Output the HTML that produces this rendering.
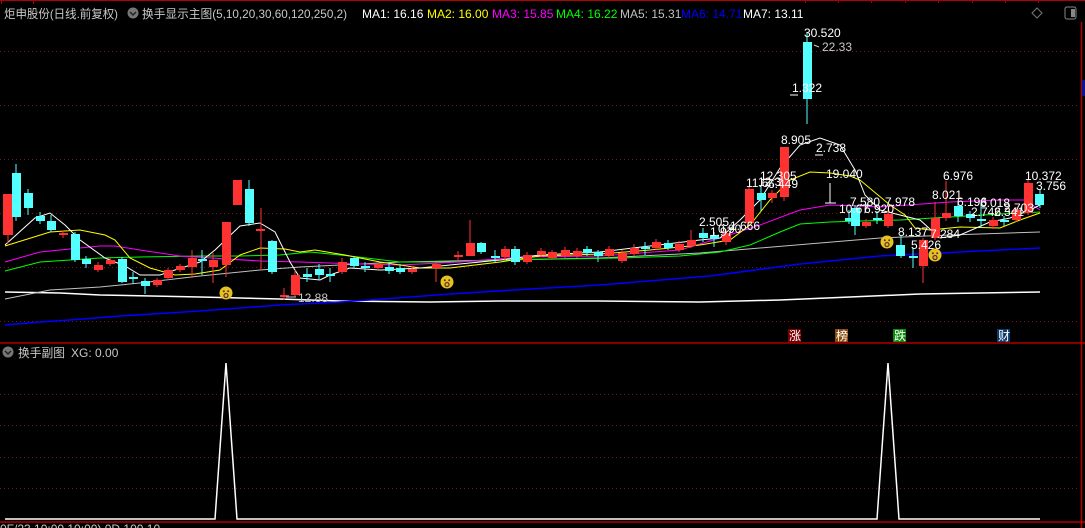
<!DOCTYPE html>
<html><head><meta charset="utf-8"><style>
html,body{margin:0;padding:0;background:#000;width:1085px;height:528px;overflow:hidden}
svg{display:block}
text{font-family:"Liberation Sans","Noto Sans CJK SC",sans-serif}
</style></head><body>
<svg width="1085" height="528" viewBox="0 0 1085 528" xmlns="http://www.w3.org/2000/svg">
<rect width="1085" height="528" fill="#000"/>
<g stroke="#b00000" stroke-width="1">
<line x1="0" y1="0.5" x2="1085" y2="0.5"/>
<line x1="1.5" y1="0" x2="1.5" y2="4"/><line x1="33.5" y1="0" x2="33.5" y2="4"/>
<line x1="805.5" y1="0" x2="805.5" y2="3"/><line x1="838.5" y1="0" x2="838.5" y2="3"/><line x1="871.5" y1="0" x2="871.5" y2="3"/><line x1="905.5" y1="0" x2="905.5" y2="3"/><line x1="938.5" y1="0" x2="938.5" y2="3"/><line x1="972.5" y1="0" x2="972.5" y2="3"/><line x1="1005.5" y1="0" x2="1005.5" y2="3"/><line x1="1038.5" y1="0" x2="1038.5" y2="3"/>
</g>
<g stroke="#7a1616" stroke-width="1" stroke-dasharray="1,3">
<line x1="0" y1="51.5" x2="1080" y2="51.5"/><line x1="0" y1="105.5" x2="1080" y2="105.5"/><line x1="0" y1="159.5" x2="1080" y2="159.5"/><line x1="0" y1="213.5" x2="1080" y2="213.5"/><line x1="0" y1="267.5" x2="1080" y2="267.5"/><line x1="0" y1="321.5" x2="1080" y2="321.5"/>
<line x1="0" y1="394.5" x2="1080" y2="394.5"/><line x1="0" y1="425.5" x2="1080" y2="425.5"/><line x1="0" y1="457.5" x2="1080" y2="457.5"/><line x1="0" y1="488.5" x2="1080" y2="488.5"/>
</g>
<g stroke="#b00000" stroke-width="1.5">
<line x1="0" y1="343" x2="1085" y2="343"/><line x1="0" y1="522" x2="1085" y2="522"/>
<line x1="1081.5" y1="22" x2="1081.5" y2="528"/>
</g>
<rect x="1082" y="80" width="3" height="16" fill="#101090"/>
<text x="4" y="18" font-size="12" fill="#c8c8c8" textLength="114" lengthAdjust="spacingAndGlyphs">炬申股份(日线.前复权)</text>
<circle cx="133" cy="13" r="5.5" fill="#777"/><path d="M130,12 l3,3 l3,-3" stroke="#222" stroke-width="1.5" fill="none"/>
<text x="142" y="18" font-size="12" fill="#c8c8c8" textLength="205" lengthAdjust="spacingAndGlyphs">换手显示主图(5,10,20,30,60,120,250,2)</text>
<text x="362" y="18" font-size="12" fill="#fff">MA1: 16.16</text>
<text x="427" y="18" font-size="12" fill="#ffff00">MA2: 16.00</text>
<text x="492" y="18" font-size="12" fill="#ff00ff">MA3: 15.85</text>
<text x="556" y="18" font-size="12" fill="#00ff00">MA4: 16.22</text>
<text x="620" y="18" font-size="12" fill="#c0c0c0">MA5: 15.31</text>
<text x="681" y="18" font-size="12" fill="#0000ff">MA6: 14.71</text>
<text x="743" y="18" font-size="12" fill="#fff">MA7: 13.11</text>
<path d="M1032,13 l5,-5 l5,5 l-5,5z" stroke="#777" fill="none"/>
<rect x="1065" y="7" width="11" height="12" rx="2" stroke="#888" fill="none"/><rect x="1071" y="9" width="4" height="8" fill="#888"/>
<g fill="none" stroke-width="1">
<polyline stroke="#ffffff" stroke-width="1.5" points="5,292 60,293 100,295 200,297 280,299 340,301 430,302 500,301 600,301 700,302 780,300 850,297 920,294 1040,292"/>
<polyline stroke="#0000ff" stroke-width="1.5" points="5,325 40,322 70,320 120,316 200,311 280,305 340,302 383,299 450,294 530,289 600,285 710,276 800,264 880,256 960,252 1040,248"/>
<polyline stroke="#c0c0c0" points="5,299 50,290 100,287 140,283 200,276 260,270 300,267 360,264 400,262 500,260 600,258 700,253 760,248 820,243 880,238 950,235 1040,232"/>
<polyline stroke="#00ff00" points="5,271 40,262 100,258 140,257 200,256 240,256 280,255 310,252 350,256 400,262 450,262 500,260 560,259 620,258 680,256 720,252 750,245 780,232 800,224 830,222 860,221 900,220 950,217 1000,214 1040,212"/>
<polyline stroke="#ff00ff" points="5,262 40,252 100,246 115,246 140,250 180,256 260,261 300,262 360,264 400,265 460,262 520,257 600,256 680,250 720,238 760,225 800,210 830,205 860,206 880,207 950,202 1000,200 1025,200 1040,210"/>
<polyline stroke="#ffff00" points="5,246 50,232 80,230 105,235 115,240 130,258 150,268 175,275 195,274 220,270 240,255 260,248 285,249 300,252 315,250 345,255 380,262 420,268 450,268 500,262 540,256 600,254 650,250 700,245 730,240 750,225 770,200 790,180 810,172 830,173 850,176 860,180 890,205 905,215 915,228 930,230 960,227 1000,228 1020,220 1040,213"/>
<polyline stroke="#ffffff" points="5,245 35,218 50,213 65,225 80,240 105,258 125,266 140,275 160,275 175,270 200,262 215,250 240,226 260,223 275,232 290,262 300,278 320,280 330,275 350,268 380,270 420,268 460,264 500,260 540,255 600,252 650,246 700,240 720,238 740,220 760,200 780,168 800,145 820,138 840,145 855,170 865,195 880,210 900,215 920,220 940,238 960,235 990,222 1010,218 1030,210 1040,205"/>
</g>
<g stroke="#ff3232" stroke-width="1">
<line x1="8" y1="194" x2="8" y2="243"/><line x1="63" y1="231" x2="63" y2="238"/><line x1="98" y1="262" x2="98" y2="272"/><line x1="110" y1="258" x2="110" y2="266"/><line x1="157" y1="278" x2="157" y2="287"/><line x1="168" y1="268" x2="168" y2="280"/><line x1="180" y1="264" x2="180" y2="272"/><line x1="192" y1="250" x2="192" y2="278"/><line x1="213" y1="253" x2="213" y2="283"/><line x1="226" y1="222" x2="226" y2="277"/><line x1="261" y1="208" x2="261" y2="270"/><line x1="284" y1="288" x2="284" y2="300"/><line x1="295" y1="270" x2="295" y2="297"/><line x1="342" y1="258" x2="342" y2="274"/><line x1="378" y1="262" x2="378" y2="270"/><line x1="412" y1="266" x2="412" y2="274"/><line x1="436" y1="262" x2="436" y2="282"/><line x1="458" y1="251" x2="458" y2="260"/><line x1="470" y1="220" x2="470" y2="256"/><line x1="505" y1="246" x2="505" y2="260"/><line x1="527" y1="252" x2="527" y2="264"/><line x1="541" y1="248" x2="541" y2="257"/><line x1="552" y1="250" x2="552" y2="260"/><line x1="565" y1="247" x2="565" y2="258"/><line x1="577" y1="248" x2="577" y2="258"/><line x1="609" y1="246" x2="609" y2="258"/><line x1="622" y1="250" x2="622" y2="263"/><line x1="634" y1="244" x2="634" y2="256"/><line x1="656" y1="239" x2="656" y2="250"/><line x1="679" y1="241" x2="679" y2="252"/><line x1="691" y1="230" x2="691" y2="248"/><line x1="726" y1="229" x2="726" y2="245"/><line x1="749" y1="187" x2="749" y2="225"/><line x1="772" y1="190" x2="772" y2="203"/><line x1="784" y1="147" x2="784" y2="201"/><line x1="866" y1="219" x2="866" y2="228"/><line x1="888" y1="210" x2="888" y2="228"/><line x1="923" y1="238" x2="923" y2="283"/><line x1="935" y1="202" x2="935" y2="240"/><line x1="946" y1="181" x2="946" y2="221"/><line x1="993" y1="217" x2="993" y2="229"/><line x1="1016" y1="207" x2="1016" y2="222"/><line x1="1028" y1="180" x2="1028" y2="215"/>
</g>
<g stroke="#54ffff" stroke-width="1">
<line x1="16" y1="164" x2="16" y2="221"/><line x1="28" y1="189" x2="28" y2="215"/><line x1="40" y1="212" x2="40" y2="224"/><line x1="51" y1="215" x2="51" y2="232"/><line x1="75" y1="232" x2="75" y2="262"/><line x1="86" y1="256" x2="86" y2="268"/><line x1="122" y1="257" x2="122" y2="283"/><line x1="133" y1="272" x2="133" y2="284"/><line x1="145" y1="278" x2="145" y2="294"/><line x1="202" y1="250" x2="202" y2="275"/><line x1="249" y1="180" x2="249" y2="226"/><line x1="272" y1="240" x2="272" y2="274"/><line x1="307" y1="268" x2="307" y2="282"/><line x1="319" y1="264" x2="319" y2="280"/><line x1="330" y1="268" x2="330" y2="282"/><line x1="354" y1="256" x2="354" y2="268"/><line x1="365" y1="262" x2="365" y2="272"/><line x1="389" y1="262" x2="389" y2="274"/><line x1="400" y1="264" x2="400" y2="274"/><line x1="481" y1="242" x2="481" y2="254"/><line x1="495" y1="250" x2="495" y2="262"/><line x1="515" y1="246" x2="515" y2="265"/><line x1="587" y1="246" x2="587" y2="256"/><line x1="598" y1="250" x2="598" y2="262"/><line x1="645" y1="242" x2="645" y2="255"/><line x1="668" y1="240" x2="668" y2="250"/><line x1="703" y1="228" x2="703" y2="242"/><line x1="714" y1="232" x2="714" y2="247"/><line x1="761" y1="186" x2="761" y2="211"/><line x1="807" y1="32" x2="807" y2="124"/><line x1="849" y1="210" x2="849" y2="224"/><line x1="855" y1="205" x2="855" y2="235"/><line x1="877" y1="211" x2="877" y2="224"/><line x1="901" y1="236" x2="901" y2="258"/><line x1="913" y1="248" x2="913" y2="268"/><line x1="958" y1="202" x2="958" y2="222"/><line x1="970" y1="211" x2="970" y2="222"/><line x1="981" y1="203" x2="981" y2="228"/><line x1="1004" y1="216" x2="1004" y2="226"/><line x1="1040" y1="190" x2="1040" y2="208"/>
</g>
<g fill="#ff3232">
<rect x="3" y="194" width="10" height="41"/><rect x="59" y="233" width="9" height="2"/><rect x="94" y="265" width="9" height="5"/><rect x="106" y="260" width="9" height="4"/><rect x="153" y="280" width="9" height="5"/><rect x="164" y="270" width="9" height="8"/><rect x="176" y="266" width="9" height="4"/><rect x="188" y="258" width="9" height="9"/><rect x="209" y="260" width="9" height="7"/><rect x="222" y="222" width="9" height="43"/><rect x="233" y="180" width="9" height="25"/><rect x="256" y="229" width="9" height="2"/><rect x="280" y="295" width="9" height="2"/><rect x="291" y="275" width="9" height="20"/><rect x="338" y="262" width="9" height="10"/><rect x="374" y="264" width="9" height="4"/><rect x="408" y="269" width="9" height="3"/><rect x="432" y="264" width="9" height="4"/><rect x="454" y="255" width="9" height="2"/><rect x="466" y="243" width="9" height="13"/><rect x="501" y="249" width="9" height="8"/><rect x="523" y="255" width="9" height="7"/><rect x="537" y="251" width="9" height="4"/><rect x="548" y="252" width="9" height="6"/><rect x="561" y="250" width="9" height="6"/><rect x="573" y="251" width="9" height="5"/><rect x="605" y="249" width="9" height="7"/><rect x="618" y="253" width="9" height="8"/><rect x="630" y="248" width="9" height="6"/><rect x="652" y="242" width="9" height="6"/><rect x="675" y="244" width="9" height="6"/><rect x="687" y="240" width="9" height="6"/><rect x="722" y="233" width="9" height="9"/><rect x="745" y="189" width="9" height="34"/><rect x="768" y="193" width="9" height="5"/><rect x="780" y="147" width="9" height="50"/><rect x="862" y="222" width="9" height="4"/><rect x="884" y="214" width="9" height="12"/><rect x="919" y="240" width="9" height="26"/><rect x="931" y="218" width="9" height="20"/><rect x="942" y="213" width="9" height="5"/><rect x="989" y="220" width="9" height="6"/><rect x="1012" y="210" width="9" height="10"/><rect x="1024" y="183" width="9" height="30"/>
</g>
<g fill="#54ffff">
<rect x="12" y="173" width="9" height="44"/><rect x="24" y="193" width="9" height="15"/><rect x="36" y="216" width="9" height="5"/><rect x="47" y="221" width="9" height="9"/><rect x="71" y="234" width="9" height="26"/><rect x="82" y="259" width="9" height="5"/><rect x="118" y="259" width="9" height="23"/><rect x="129" y="277" width="9" height="2"/><rect x="141" y="281" width="9" height="5"/><rect x="198" y="259" width="9" height="2"/><rect x="245" y="189" width="9" height="34"/><rect x="268" y="241" width="9" height="31"/><rect x="303" y="274" width="9" height="3"/><rect x="315" y="269" width="9" height="6"/><rect x="326" y="274" width="9" height="2"/><rect x="350" y="258" width="9" height="8"/><rect x="361" y="266" width="9" height="2"/><rect x="385" y="267" width="9" height="4"/><rect x="396" y="268" width="9" height="4"/><rect x="477" y="243" width="9" height="9"/><rect x="491" y="256" width="9" height="2"/><rect x="511" y="249" width="9" height="13"/><rect x="583" y="249" width="9" height="4"/><rect x="594" y="252" width="9" height="4"/><rect x="641" y="247" width="9" height="2"/><rect x="664" y="243" width="9" height="5"/><rect x="699" y="233" width="9" height="5"/><rect x="710" y="235" width="9" height="4"/><rect x="757" y="193" width="9" height="7"/><rect x="803" y="42" width="9" height="57"/><rect x="845" y="218" width="9" height="3"/><rect x="851" y="208" width="9" height="18"/><rect x="873" y="218" width="9" height="2"/><rect x="896" y="245" width="9" height="11"/><rect x="909" y="256" width="9" height="2"/><rect x="954" y="206" width="9" height="10"/><rect x="966" y="214" width="9" height="4"/><rect x="977" y="219" width="9" height="2"/><rect x="1000" y="220" width="9" height="2"/><rect x="1035" y="194" width="9" height="11"/>
</g>
<path d="M830,183 V203 M825,203 H836" stroke="#fff"/>
<g font-size="12" fill="#fff">
<text x="804" y="37">30.520</text><text x="822" y="51" fill="#c8c8c8">22.33</text>
<path d="M814,45 l5,2" stroke="#c8c8c8"/>
<text x="792" y="92">1.322</text><path d="M790,95 h8" stroke="#fff"/>
<text x="781" y="144">8.905</text><text x="816" y="152">2.738</text><path d="M815,155 h8" stroke="#fff"/>
<text x="826" y="178">19.040</text>
<text x="746" y="187">11.6</text><text x="758" y="186">12.3</text><text x="768" y="188">6.449</text><text x="760" y="180">12.305</text>
<text x="699" y="226">2.505</text><text x="710" y="236">1.97</text><text x="718" y="233">0.90</text><text x="730" y="230">1.666</text>
<text x="839" y="213">10.67</text><text x="850" y="206">7.580</text><text x="864" y="213">6.920</text><text x="885" y="206">7.978</text>
<text x="898" y="236">8.137</text><text x="930" y="238">7.284</text><text x="911" y="249">5.426</text>
<text x="932" y="199">8.021</text><text x="943" y="180">6.976</text><text x="957" y="206">6.196</text>
<text x="971" y="216">2.746</text><text x="980" y="207">6.018</text><text x="994" y="216">2.341</text><text x="1004" y="212">2.703</text>
<text x="1025" y="180">10.372</text><text x="1036" y="190">3.756</text>
<text x="298" y="302" fill="#c8c8c8">12.88</text><path d="M286,297 h10" stroke="#c8c8c8"/>
</g>
<g>
<g transform="translate(226,293)"><circle r="6.5" fill="#e8c020"/><circle cx="-2.2" cy="-1.8" r="1" fill="#533"/><circle cx="2.2" cy="-1.8" r="1" fill="#533"/><ellipse cy="2.5" rx="2" ry="2" fill="none" stroke="#533" stroke-width="1.2"/></g>
<g transform="translate(447,282)"><circle r="6.5" fill="#e8c020"/><circle cx="-2.2" cy="-1.8" r="1" fill="#533"/><circle cx="2.2" cy="-1.8" r="1" fill="#533"/><ellipse cy="2.5" rx="2" ry="2" fill="none" stroke="#533" stroke-width="1.2"/></g>
<g transform="translate(887,242)"><circle r="6.5" fill="#e8c020"/><circle cx="-2.2" cy="-1.8" r="1" fill="#533"/><circle cx="2.2" cy="-1.8" r="1" fill="#533"/><ellipse cy="2.5" rx="2" ry="2" fill="none" stroke="#533" stroke-width="1.2"/></g>
<g transform="translate(935,255)"><circle r="6.5" fill="#e8c020"/><circle cx="-2.2" cy="-1.8" r="1" fill="#533"/><circle cx="2.2" cy="-1.8" r="1" fill="#533"/><ellipse cy="2.5" rx="2" ry="2" fill="none" stroke="#533" stroke-width="1.2"/></g>
</g>
<g font-size="12" fill="#fff">
<rect x="788" y="329" width="13" height="13" fill="#7a0000"/><text x="789" y="340">涨</text>
<rect x="835" y="329" width="13" height="13" fill="#8b4a10"/><text x="836" y="340">榜</text>
<rect x="893" y="329" width="13" height="13" fill="#0a8a0a"/><text x="894" y="340">跌</text>
<rect x="997" y="329" width="13" height="13" fill="#0a3a6a"/><text x="998" y="340">财</text>
</g>
<circle cx="8" cy="352" r="5.5" fill="#777"/><path d="M5,351 l3,3 l3,-3" stroke="#222" stroke-width="1.5" fill="none"/>
<text x="18" y="357" font-size="12" fill="#c8c8c8" textLength="47" lengthAdjust="spacingAndGlyphs">换手副图</text>
<text x="71" y="357" font-size="12" fill="#c8c8c8">XG: 0.00</text>
<polyline fill="none" stroke="#fff" stroke-width="1.5" points="5,519 215,519 226,363 237,519 877,519 888,363 899,519 1040,519"/>
<text x="0" y="533" font-size="12" fill="#c8c8c8">0F/23 10:00 10:00) 0D 100.10</text>
</svg>
</body></html>
